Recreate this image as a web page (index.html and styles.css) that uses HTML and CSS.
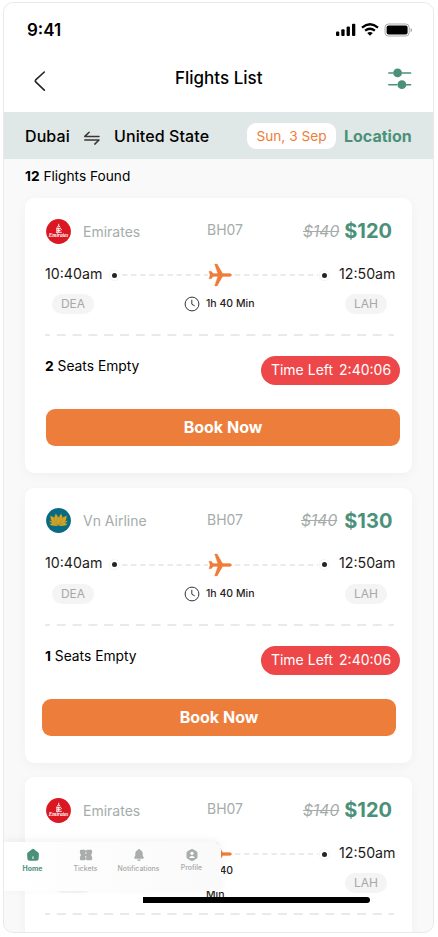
FILE: index.html
```html
<!DOCTYPE html>
<html lang="en">
<head>
<meta charset="utf-8">
<title>Flights List</title>
<link rel="stylesheet" href="styles.css">
</head>
<body>
<svg class="defs" aria-hidden="true">
  <symbol id="plane" viewBox="0 0 24 24">
    <path d="M1.6 8.2 3.2 8.2 5.2 10.6 9.8 10.6 6.6 1.1 9.2 1.1 14.6 10.5 22 10.5Q23.6 10.9 23.6 12 23.6 13.1 22 13.5L14.6 13.5 9.2 22.9 6.6 22.9 9.8 13.4 5.2 13.4 3.2 15.8 .9 15.8 2.1 12 .9 8.2Z" fill="#ee7d3a" stroke="#ee7d3a" stroke-width=".3" stroke-linejoin="round"/>
  </symbol>
  <symbol id="clock" viewBox="0 0 16 16">
    <circle cx="8" cy="8" r="6.9" fill="none" stroke="#333" stroke-width="1"/>
    <path d="M7.8 4.2V8.2L10.4 9.7" fill="none" stroke="#333" stroke-width="1" stroke-linecap="round" stroke-linejoin="round"/>
  </symbol>
  <symbol id="lotus" viewBox="0 0 25 25">
    <circle cx="12.5" cy="12.5" r="12.4" fill="#086a83"/>
    <g fill="#d9a520" stroke="#086a83" stroke-width=".2" stroke-linejoin="round">
      <path d="M12.5 17.8Q6 19 2.6 15.6 5 15.8 6 15.3L2.9 12.9Q9 12.4 12.5 17.8Z"/>
      <path d="M12.5 17.8Q19 19 22.4 15.6 20 15.8 19 15.3L22.1 12.9Q16 12.4 12.5 17.8Z"/>
      <path d="M12.2 17.4Q4 15.5 4.2 7.6 11.8 10 12.2 17.4Z"/>
      <path d="M12.8 17.4Q21 15.5 20.8 7.6 13.2 10 12.8 17.4Z"/>
      <path d="M12.2 17.4Q5.8 12 9.8 5.5 14 10 12.2 17.4Z"/>
      <path d="M12.8 17.4Q19.2 12 15.2 5.5 11 10 12.8 17.4Z"/>
      <path d="M12.5 17.8Q9.3 13 12.5 8.2 15.7 13 12.5 17.8Z"/>
    </g>
  </symbol>
</svg>

<main class="phone">
  <header class="status">
    <span class="clock-time">9:41</span>
    <svg class="signal" viewBox="0 0 77 14">
      <g fill="#000">
        <rect x="0" y="8.6" width="3.3" height="4.3" rx="1"/>
        <rect x="5.3" y="6.3" width="3.3" height="6.6" rx="1"/>
        <rect x="10.6" y="3.4" width="3.3" height="9.5" rx="1"/>
        <rect x="16" y=".8" width="3.3" height="12.1" rx="1"/>
      </g>
      <path d="M26 4.6Q34 -2 42 4.6M29.1 7.7Q34 3.8 38.9 7.7" fill="none" stroke="#000" stroke-width="2.3"/>
      <path d="M31.2 10Q34 7.8 36.8 10L34 12.7Z"/>
      <rect x="49" y="1" width="24.2" height="12" rx="3.4" fill="none" stroke="#a9a9a9"/>
      <rect x="50.6" y="2.6" width="21" height="8.8" rx="2"/>
      <path d="M74.6 5V9.2Q76.2 8.5 76.2 7.1 76.2 5.7 74.6 5Z" fill="#a9a9a9"/>
    </svg>
  </header>
  <nav class="topbar">
    <svg class="back" viewBox="0 0 12 20"><path d="M10.3 1 1.7 8.9Q.9 9.9 1.7 10.9L10.3 19.2" fill="none" stroke="#292520" stroke-width="1.6" stroke-linecap="round" stroke-linejoin="round"/></svg>
    <h1 class="title">Flights List</h1>
    <svg class="filter" viewBox="0 0 24 22">
      <path d="M.8 5H5M14.5 5H22.6M.8 16.8H9M18 16.8H22.6" stroke="#4b917a" stroke-width="1.5" stroke-linecap="round"/>
      <circle cx="9.6" cy="4.9" r="4.4" fill="#4b917a"/><circle cx="13.9" cy="16.7" r="4.4" fill="#4b917a"/>
    </svg>
  </nav>
  <section class="search">
    <span class="city from">Dubai</span>
    <svg class="swap" viewBox="0 0 16 14"><path d="M.8 5.4H15M.8 5.4 5.1 1.2M15 9H.8M15 9 10.8 13.1" fill="none" stroke="#3a3733" stroke-width="1.5" stroke-linecap="round" stroke-linejoin="round"/></svg>
    <span class="city to">United State</span>
    <span class="date">Sun, 3 Sep</span>
    <span class="location">Location</span>
  </section>

  <p class="found"><b>12</b> Flights Found</p>

  <div class="list">
    <article class="card">
      <div class="airline">
        <svg class="logo" viewBox="0 0 25 25">
          <circle cx="12.5" cy="12.5" r="12.4" fill="#db1721"/>
          <path d="M12.7 4.8V7.2M11 8.2Q13 5.8 14.4 8.2M10.4 9.7H14.6M10.9 8.6V13.3M14.6 9.4Q16.4 10.6 14.5 11.6M12.7 8.5V13M10 13.3H15.8M10.8 11.6H14" stroke="#fff" stroke-width=".9" fill="none"/>
          <text x="12.6" y="18" text-anchor="middle" textLength="19.5" lengthAdjust="spacingAndGlyphs" class="logo-word">Emirates</text>
        </svg>
        <span class="name">Emirates</span><span class="code">BH07</span>
        <s class="old">$140</s><strong class="price">$120</strong>
      </div>
      <div class="route">
        <span class="time">10:40am</span><i class="dot"></i><svg class="dash"><line x1="0" y1="1" x2="100%" y2="1"/></svg>
        <svg class="plane"><use href="#plane"/></svg><svg class="dash"><line x1="0" y1="1" x2="100%" y2="1"/></svg><i class="dot"></i><span class="time end">12:50am</span>
      </div>
      <div class="ports">
        <span class="port">DEA</span><svg class="clock"><use href="#clock"/></svg><span class="duration">1h 40 Min</span><span class="port last">LAH</span>
      </div>
      <svg class="divider"><line x1="0" y1="1" x2="100%" y2="1"/></svg>
      <div class="seats"><span class="empty"><b>2</b> Seats Empty</span><span class="left"><span>Time Left</span><span>2:40:06</span></span></div>
      <button class="book">Book Now</button>
    </article>

    <article class="card">
      <div class="airline">
        <svg class="logo"><use href="#lotus"/></svg>
        <span class="name">Vn Airline</span><span class="code">BH07</span>
        <s class="old shifted-old">$140</s><strong class="price">$130</strong>
      </div>
      <div class="route">
        <span class="time">10:40am</span><i class="dot"></i><svg class="dash"><line x1="0" y1="1" x2="100%" y2="1"/></svg>
        <svg class="plane"><use href="#plane"/></svg><svg class="dash"><line x1="0" y1="1" x2="100%" y2="1"/></svg><i class="dot"></i><span class="time end">12:50am</span>
      </div>
      <div class="ports">
        <span class="port">DEA</span><svg class="clock"><use href="#clock"/></svg><span class="duration">1h 40 Min</span><span class="port last">LAH</span>
      </div>
      <svg class="divider"><line x1="0" y1="1" x2="100%" y2="1"/></svg>
      <div class="seats"><span class="empty"><b>1</b> Seats Empty</span><span class="left"><span>Time Left</span><span>2:40:06</span></span></div>
      <button class="book shifted">Book Now</button>
    </article>

    <article class="card">
      <div class="airline">
        <svg class="logo" viewBox="0 0 25 25">
          <circle cx="12.5" cy="12.5" r="12.4" fill="#db1721"/>
          <path d="M12.7 4.8V7.2M11 8.2Q13 5.8 14.4 8.2M10.4 9.7H14.6M10.9 8.6V13.3M14.6 9.4Q16.4 10.6 14.5 11.6M12.7 8.5V13M10 13.3H15.8M10.8 11.6H14" stroke="#fff" stroke-width=".9" fill="none"/>
          <text x="12.6" y="18" text-anchor="middle" textLength="19.5" lengthAdjust="spacingAndGlyphs" class="logo-word">Emirates</text>
        </svg>
        <span class="name">Emirates</span><span class="code">BH07</span>
        <s class="old">$140</s><strong class="price">$120</strong>
      </div>
      <div class="route">
        <span class="time">10:40am</span><i class="dot"></i><svg class="dash"><line x1="0" y1="1" x2="100%" y2="1"/></svg>
        <svg class="plane"><use href="#plane"/></svg><svg class="dash"><line x1="0" y1="1" x2="100%" y2="1"/></svg><i class="dot"></i><span class="time end">12:50am</span>
      </div>
      <div class="ports">
        <span class="port">DEA</span><svg class="clock"><use href="#clock"/></svg><span class="duration wrapped">1h 40 Min</span><span class="port last">LAH</span>
      </div>
      <svg class="divider"><line x1="0" y1="1" x2="100%" y2="1"/></svg>
    </article>
  </div>

  <nav class="tabs">
    <a class="tab active"><svg viewBox="0 0 14 14"><path d="M6 1.2Q7 .5 8 1.2L12.2 4.5Q13.2 5.3 12.9 6.5L12.6 11Q12.3 12.8 10.5 12.8H3.5Q1.7 12.8 1.4 11L1.1 6.5Q.8 5.3 1.8 4.5Z" fill="#4b917a"/><path d="M7 8.8V10.6" stroke="#fff" stroke-width="1" stroke-linecap="round"/></svg><span>Home</span></a>
    <a class="tab"><svg viewBox="0 0 14 14"><path d="M2.2 1.7H6V2.6H7.6V1.7H11.8Q13.1 1.7 13.1 3V5.3Q12.2 5.8 12.2 7 12.2 8.2 13.1 8.7V11Q13.1 12.3 11.8 12.3H7.6V11.4H6V12.3H2.2Q.9 12.3 .9 11V8.7Q1.8 8.2 1.8 7 1.8 5.8 .9 5.3V3Q.9 1.7 2.2 1.7Z" fill="#a9adab"/><path d="M6.8 4.2V5.8M6.8 8.2V9.8" stroke="#fff" stroke-width="1"/></svg><span>Tickets</span></a>
    <a class="tab"><svg viewBox="0 0 14 14"><path d="M7 .9Q8 .9 8.3 1.9 10.7 2.7 10.7 5.5V7.5L11.7 9.4Q12.1 10.8 10.8 10.8H3.2Q1.9 10.8 2.3 9.4L3.3 7.5V5.5Q3.3 2.7 5.7 1.9 6 .9 7 .9ZM5.1 11.5H8.9Q8.4 13.1 7 13.1 5.6 13.1 5.1 11.5Z" fill="#a9adab"/></svg><span>Notifications</span></a>
    <a class="tab raised"><svg viewBox="0 0 14 14"><path d="M6 1.3Q7 .8 8 1.3L11.5 3.3Q12.5 3.9 12.5 5V9Q12.5 10.1 11.5 10.7L8 12.7Q7 13.2 6 12.7L2.5 10.7Q1.5 10.1 1.5 9V5Q1.5 3.9 2.5 3.3Z" fill="#a9adab"/><circle cx="7" cy="5.3" r="1.6" fill="#fff"/><path d="M4.2 10Q4.5 7.9 7 7.9 9.5 7.9 9.8 10Z" fill="#fff"/></svg><span>Profile</span></a>
  </nav>
  <div class="home-indicator"></div>
</main>
</body>
</html>
```
FILE: styles.css
```css
* { box-sizing: border-box; }
body { margin: 0; background: #fff; font-family: Inter, sans-serif; color: #000; }
svg { display: block; flex: none; }
.defs { position: absolute; width: 0; height: 0; }
.logo-word { font: italic 700 5.6px "Liberation Serif", serif; fill: #fff; }

.phone {
  position: relative;
  width: 431px;
  height: 931px;
  margin: 2px 0 0 3px;
  border: 1px solid #e9e9e9;
  border-radius: 10px;
  background: #f9f9f9;
  overflow: hidden;
}
.status, .topbar { display: flex; align-items: center; background: #fff; }
.status { justify-content: space-between; height: 53px; padding: 0 22px 0 23px; }
.clock-time { font-size: 17px; font-weight: 600; line-height: 20px; }
.signal { width: 77px; height: 14px; margin-right: -2px; }
.topbar { height: 56px; padding: 0 21px 12px 30px; }
.back { width: 12px; height: 20px; margin-top: 6px; }
.title { margin: 0 0 0 129px; font-size: 17px; font-weight: 500; line-height: 22px; white-space: nowrap; }
.filter { width: 24px; height: 22px; margin: 2px 0 0 auto; }

.search { display: flex; align-items: center; height: 47px; padding-left: 21px; background: #dfe8e6; }
.city { font-size: 16px; line-height: 24px; font-weight: 500; letter-spacing: .1px; white-space: nowrap; }
.from { width: 59px; }
.swap { width: 16px; height: 14px; margin-top: 4px; }
.to { width: 133px; margin-left: 14px; }
.date { width: 89px; height: 26px; border-radius: 9px; background: #fff; color: #ee7d3a; font-size: 13.7px; line-height: 26px; text-align: center; white-space: nowrap; }
.location { margin-left: 8px; color: #4b917a; font-size: 16px; font-weight: 700; }

.found { margin: 7px 0 0 21px; font-size: 13.7px; line-height: 20px; height: 32px; }
.list { display: flex; flex-direction: column; gap: 14.5px; margin-left: 21px; width: 387px; }
.card { flex: none; height: 275px; padding: 20px 12px 0 21px; border-radius: 9px; background: #fff; box-shadow: 0 3px 12px rgba(0, 0, 0, .04); }
.airline { display: flex; align-items: center; height: 26px; color: #a5acaa; }
.logo { width: 25px; height: 25px; }
.name { width: 124px; margin-left: 12px; font-size: 14px; }
.code { width: 96px; font-size: 14px; line-height: 20px; padding-bottom: 2px; }
.old { font-size: 15.6px; font-style: italic; }
.shifted-old { margin-left: -2px; margin-right: 2px; }
.price { margin-left: 5px; color: #4b917a; font-size: 20px; font-weight: 700; }

.route { display: flex; align-items: center; height: 24px; margin: 19px 0 0 -1px; }
.time { width: 67px; font-size: 14.2px; line-height: 20px; margin-top: -3px; color: #1d1b19; white-space: nowrap; }
.dot { width: 5px; height: 5px; border-radius: 50%; background: #272320; box-shadow: 0 0 0 2px #fff, 0 0 0 3px #f4f4f4; flex: none; }
.dash { width: 86px; height: 2px; margin-left: 5px; stroke: #d6d6d6; stroke-dasharray: 5.4 3.7; }
.plane { width: 24px; height: 24px; }
.plane + .dash { margin: 0 4px 0 3px; width: 83px; }
.end { width: auto; margin-left: 12px; }

.ports { display: flex; align-items: center; height: 20px; margin: 7px 0 0 6px; }
.port { width: 42px; height: 20px; border-radius: 10px; background: #f4f4f4; color: #a5a9a7; font-size: 12px; line-height: 19px; text-align: center; }
.clock { width: 16px; height: 16px; margin-left: 90px; }
.duration { width: 139px; margin-left: 6px; font-size: 10.5px; font-weight: 500; line-height: 24px; color: #272320; }
.wrapped { width: 30px; margin-right: 109px; }
.divider { width: 349px; height: 2px; margin: 20px 0 0 -1px; stroke: #d4d4d4; stroke-dasharray: 9 6.8; stroke-dashoffset: 4; }
.seats { display: flex; justify-content: space-between; height: 29px; margin: 20px 0 0 -1px; }
.empty { font-size: 13.8px; line-height: 20px; }
.left { display: flex; justify-content: center; gap: 6px; width: 139px; height: 29px; padding-left: 1px; border-radius: 15px; background: #ee4749; color: #fff; font-size: 14px; line-height: 27px; white-space: nowrap; }
.book { display: block; width: 354px; height: 37px; margin-top: 24px; padding: 0; border: 0; border-radius: 9px; background: #ed7d3b; color: #fff; font: 700 16px/37px Inter, sans-serif; }
.shifted { margin-left: -4px; }

.tabs {
  position: absolute;
  left: 0;
  top: 839px;
  display: flex;
  width: 217px;
  height: 49px;
  padding: 6px 2px 0;
  border-radius: 0 8px 0 0;
  background: linear-gradient(90deg, #fff, #fcfcfc 50%, #fafafa);
  box-shadow: 0 -2px 9px rgba(0, 0, 0, .055);
}
.tab { display: flex; flex: 0 0 53px; flex-direction: column; align-items: center; gap: 2px; color: #a5a9a7; font-size: 6.9px; line-height: 9px; font-weight: 500; }
.tab svg { width: 14px; height: 14px; }
.active { color: #4b917a; font-weight: 700; }
.raised span { margin-top: -1px; }
.home-indicator { position: absolute; left: 139px; top: 894px; width: 227px; height: 6px; border-radius: 0 3px 3px 0; background: #000; }
```
